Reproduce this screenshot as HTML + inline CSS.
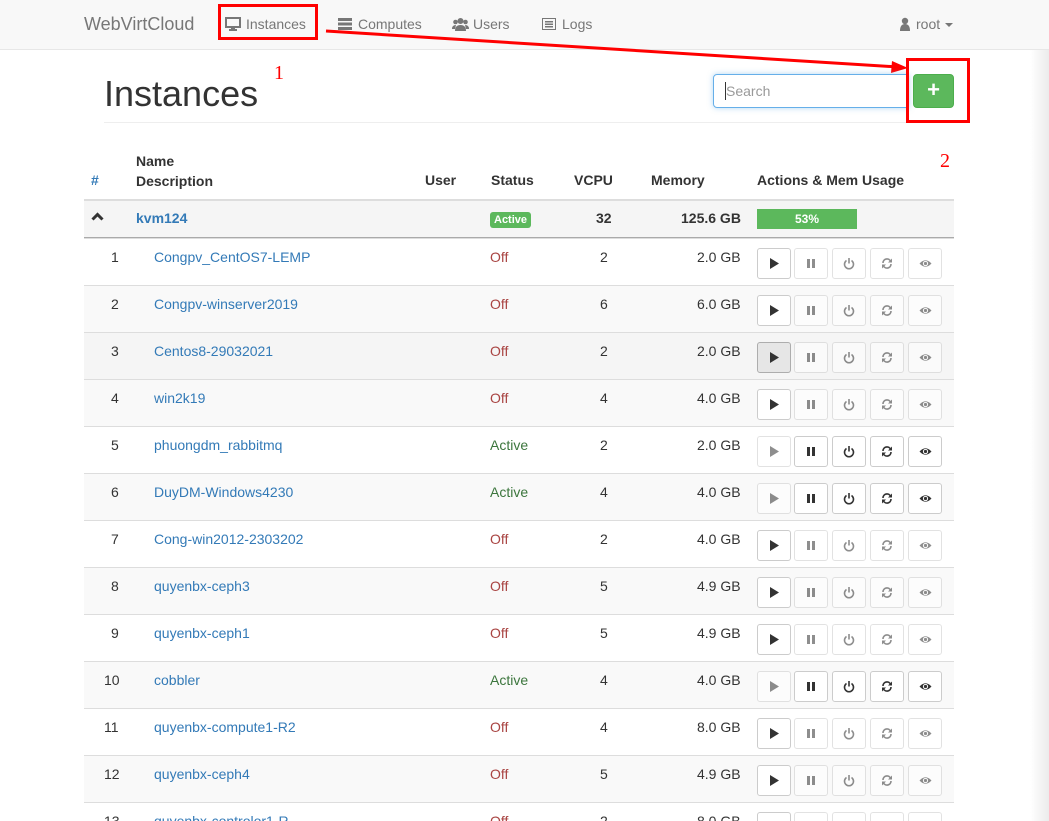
<!DOCTYPE html>
<html style="width:1049px;height:821px;overflow:hidden"><head><meta charset="utf-8"><style>
*{box-sizing:border-box}
body{margin:0;width:1049px;height:821px;overflow:hidden;background:#fff;font-family:"Liberation Sans",sans-serif;font-size:14px;color:#333;position:relative}
.nav{position:absolute;left:0;top:0;width:1049px;height:50px;background:#f8f8f8;border-bottom:1px solid #e7e7e7}
.nav span{position:absolute;top:16px;color:#777;font-size:14px}
.a{position:absolute}
.row{position:absolute;left:84px;width:870px;height:47px;border-top:1px solid #ddd}
.row div{position:absolute;top:10px}
.lnk{color:#337ab7}
.off{color:#a94442}
.on{color:#3c763d}
.btn{position:absolute;top:9px;width:34px;height:31px;border:1px solid #ccc;border-radius:3px;background:#fff}
.btn svg{position:absolute;left:10px;top:8px}
.dis{opacity:.55}
</style></head><body>
<div class="nav">
<span style="left:84px;font-size:18px;top:14px">WebVirtCloud</span>
<svg class="a" style="left:225px;top:17px" width="16" height="14" viewBox="0 0 16 14"><rect x="1" y="1" width="14" height="9" fill="none" stroke="#777" stroke-width="2"/><rect x="6" y="10" width="4" height="2" fill="#777"/><rect x="4" y="12" width="8" height="2" fill="#777"/></svg>
<span style="left:246px">Instances</span>
<svg class="a" style="left:338px;top:18px" width="14" height="12"><rect y="0" width="14" height="3" fill="#777"/><rect y="4.5" width="14" height="3" fill="#777"/><rect y="9" width="14" height="3" fill="#777"/></svg>
<span style="left:358px">Computes</span>
<svg class="a" style="left:452px;top:17px" width="17" height="14"><circle cx="8.5" cy="4" r="3" fill="#777"/><circle cx="3.5" cy="5" r="2.3" fill="#777"/><circle cx="13.5" cy="5" r="2.3" fill="#777"/><path d="M3 14 Q3 8 8.5 8 Q14 8 14 14Z M0 12 Q0 8 4 8 L3 12Z M17 12 Q17 8 13 8 L14 12Z" fill="#777"/></svg>
<span style="left:473px">Users</span>
<svg class="a" style="left:542px;top:18px" width="14" height="12"><rect x="0.5" y="0.5" width="13" height="11" fill="none" stroke="#777"/><rect x="3" y="3" width="8" height="1.5" fill="#777"/><rect x="3" y="5.5" width="8" height="1.5" fill="#777"/><rect x="3" y="8" width="8" height="1.5" fill="#777"/></svg>
<span style="left:562px">Logs</span>
<svg class="a" style="left:900px;top:17px" width="10" height="14"><circle cx="5" cy="4" r="3.2" fill="#777"/><path d="M0 14 Q0 7 5 7 Q10 7 10 14Z" fill="#777"/></svg>
<span style="left:916px">root</span>
<svg class="a" style="left:945px;top:23px" width="8" height="5"><path d="M0 0H8L4 4Z" fill="#777"/></svg>
</div>
<div class="a" style="left:1030px;top:50px;width:19px;height:771px;background:linear-gradient(90deg,rgba(0,0,0,0),rgba(0,0,0,.08))"></div>
<div class="a" style="left:218px;top:4px;width:100px;height:36px;border:3px solid #f00"></div>
<svg class="a" style="left:318px;top:25px" width="600" height="50"><line x1="8" y1="6" x2="580" y2="42" stroke="#f00" stroke-width="3"/><path d="M590 43 L574 36 L573 48Z" fill="#f00"/></svg>
<div class="a" style="left:274px;top:62px;color:#f00;font-family:'Liberation Serif',serif;font-size:20px">1</div>
<div class="a" style="left:104px;top:73px;font-size:36px;color:#333">Instances</div>
<div class="a" style="left:104px;top:122px;width:850px;height:1px;background:#eee"></div>
<div class="a" style="left:713px;top:74px;width:196px;height:34px;border:1px solid #66afe9;border-radius:4px 0 0 4px;box-shadow:0 0 6px rgba(102,175,233,.5);color:#999;padding:8px 12px">Search</div>
<div class="a" style="left:725px;top:82px;width:1px;height:18px;background:#333"></div>
<div class="a" style="left:913px;top:74px;width:41px;height:34px;background:#5cb85c;border:1px solid #4cae4c;border-radius:4px;color:#fff;font-size:22px;font-weight:bold;text-align:center;line-height:30px">+</div>
<div class="a" style="left:906px;top:58px;width:64px;height:65px;border:3px solid #f00"></div>
<div class="a" style="left:940px;top:150px;color:#f00;font-family:'Liberation Serif',serif;font-size:20px">2</div>
<div class="a" style="left:91px;top:172px;color:#337ab7;font-weight:bold">#</div>
<div class="a" style="left:136px;top:151px;font-weight:bold;line-height:20px">Name<br>Description</div>
<div class="a" style="left:425px;top:172px;font-weight:bold">User</div>
<div class="a" style="left:491px;top:172px;font-weight:bold">Status</div>
<div class="a" style="left:574px;top:172px;font-weight:bold">VCPU</div>
<div class="a" style="left:651px;top:172px;font-weight:bold">Memory</div>
<div class="a" style="left:757px;top:172px;font-weight:bold">Actions &amp; Mem Usage</div>
<div class="a" style="left:84px;top:199px;width:870px;height:40px;background:#f5f5f5;border-top:2px solid #ddd;border-bottom:2px solid #aaa"></div>
<svg class="a" style="left:91px;top:212px" width="13" height="9"><path d="M1.5 7.5 L6.5 2.5 L11.5 7.5" fill="none" stroke="#333" stroke-width="3"/></svg>
<div class="a lnk" style="left:136px;top:210px;font-weight:bold">kvm124</div>
<div class="a" style="left:490px;top:212px;background:#5cb85c;color:#fff;font-size:11px;font-weight:bold;padding:2px 4px;border-radius:3px">Active</div>
<div class="a" style="left:596px;top:210px;font-weight:bold">32</div>
<div class="a" style="left:681px;top:210px;font-weight:bold">125.6 GB</div>
<div class="a" style="left:757px;top:209px;width:100px;height:20px;background:#5cb85c;color:#fff;font-size:12px;font-weight:bold;text-align:center;line-height:20px">53%</div>
<div id="rows"></div>
<script>
var d=[["Congpv_CentOS7-LEMP",0,2,"2.0"],["Congpv-winserver2019",0,6,"6.0"],["Centos8-29032021",0,2,"2.0"],["win2k19",0,4,"4.0"],["phuongdm_rabbitmq",1,2,"2.0"],["DuyDM-Windows4230",1,4,"4.0"],["Cong-win2012-2303202",0,2,"4.0"],["quyenbx-ceph3",0,5,"4.9"],["quyenbx-ceph1",0,5,"4.9"],["cobbler",1,4,"4.0"],["quyenbx-compute1-R2",0,4,"8.0"],["quyenbx-ceph4",0,5,"4.9"],["quyenbx-controlor1-R",0,2,"8.0"]];
var ic=['<svg width="12" height="13"><path d="M2 1L11 6.5L2 12Z" fill="#333"/></svg>',
'<svg width="12" height="13"><rect x="2" y="2" width="3" height="9" fill="#333"/><rect x="7" y="2" width="3" height="9" fill="#333"/></svg>',
'<svg width="12" height="13"><path d="M3.5 3.5A4.5 4.5 0 1 0 8.5 3.5" fill="none" stroke="#333" stroke-width="1.6"/><line x1="6" y1="1" x2="6" y2="6.5" stroke="#333" stroke-width="1.6"/></svg>',
'<svg width="12" height="13"><path d="M2 6A4 4 0 0 1 9.5 4M10 7A4 4 0 0 1 2.5 9" fill="none" stroke="#333" stroke-width="1.6"/><path d="M11 1.5V5.5H7Z M1 11.5V7.5H5Z" fill="#333"/></svg>',
'<svg width="13" height="13"><path d="M0.5 6.5Q6.5 0 12.5 6.5Q6.5 13 0.5 6.5Z" fill="#333"/><circle cx="6.5" cy="6.5" r="2.6" fill="#fff"/><circle cx="6.5" cy="6.5" r="1.6" fill="#333"/></svg>'];
var h="";
d.forEach(function(r,i){var t=238+47*i;var bg=i==2?"#f5f5f5":(i%2?"#f9f9f9":"#fff");
h+='<div class="row" style="top:'+t+'px;background:'+bg+'">';
h+='<div style="left:'+(i>8?20:27)+'px">'+(i+1)+'</div><div class="lnk" style="left:70px">'+r[0]+'</div>';
h+='<div class="'+(r[1]?'on':'off')+'" style="left:406px">'+(r[1]?'Active':'Off')+'</div><div style="left:516px">'+r[2]+'</div><div style="left:613px">'+r[3]+' GB</div>';
var xs=[673,710,748,786,824];
for(var k=0;k<5;k++){var dis=r[1]?(k==0):(k>0);h+='<span class="btn'+(dis?' dis':'')+'" style="left:'+xs[k]+'px;'+(i==2&&k==0?'background:#e6e6e6;border-color:#adadad':'')+'">'+ic[k]+'</span>';}
h+='</div>';});
document.getElementById("rows").innerHTML=h;
</script>
</body></html>
